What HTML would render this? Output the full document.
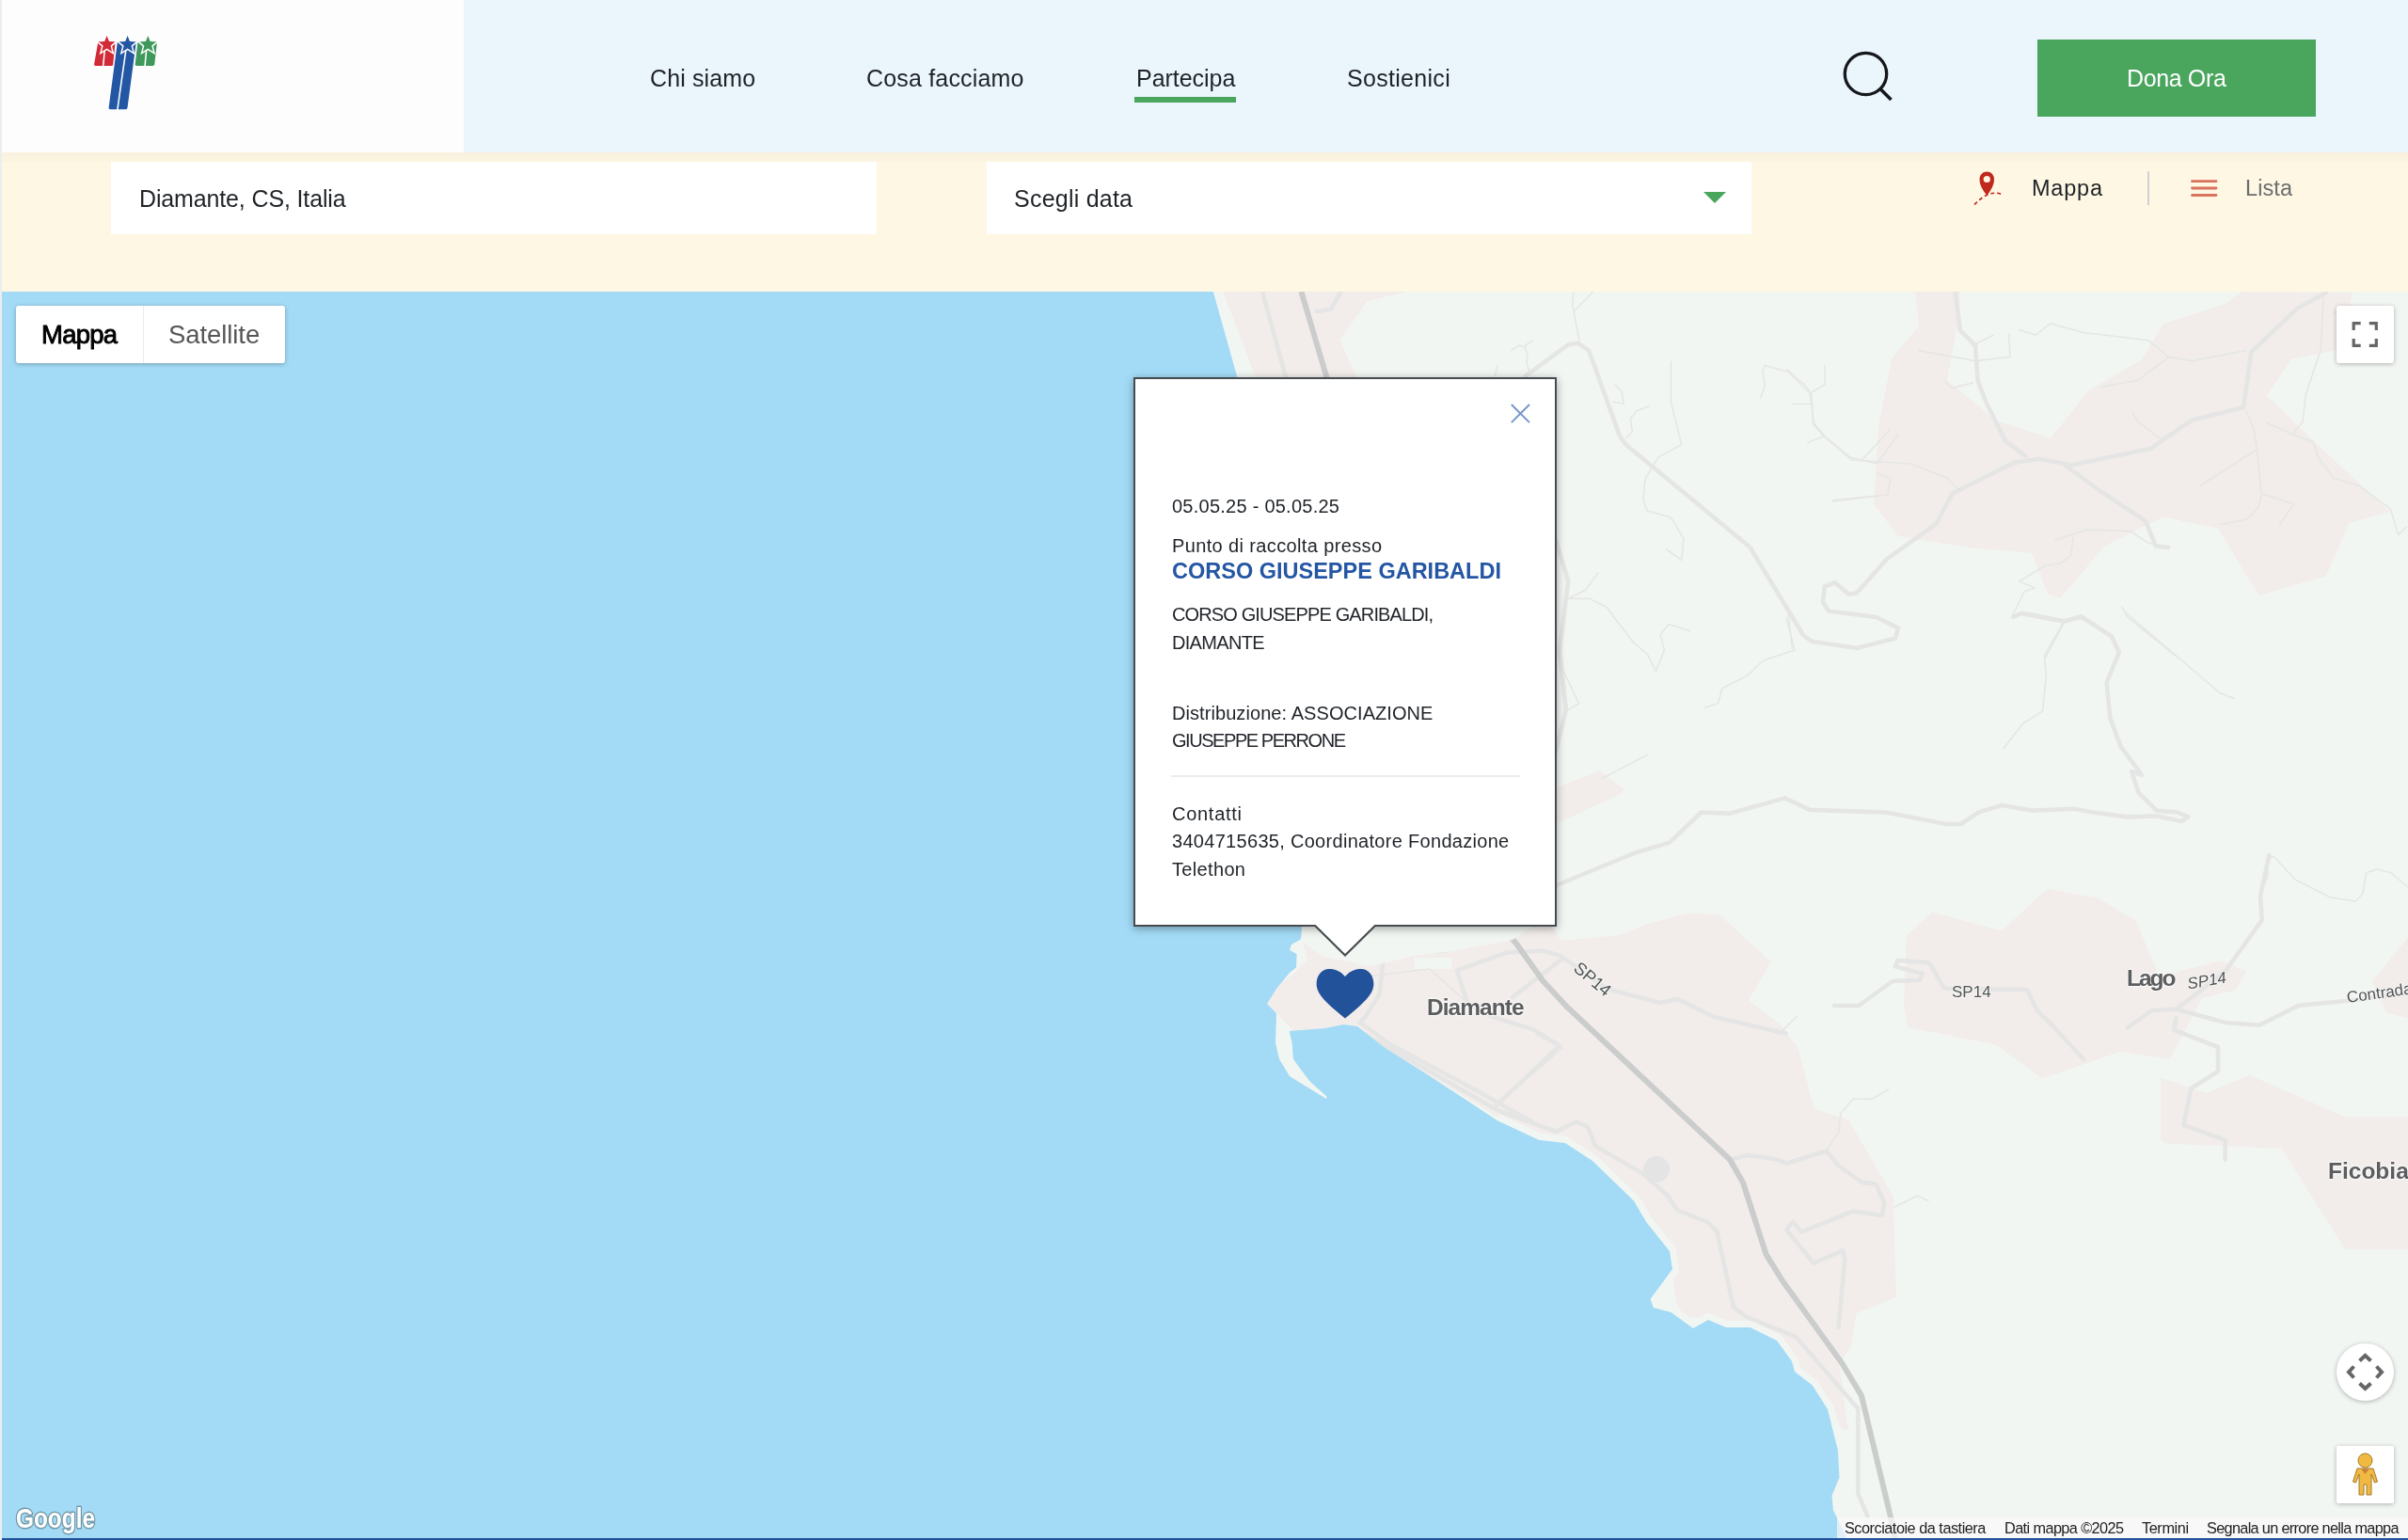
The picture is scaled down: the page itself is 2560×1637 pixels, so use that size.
<!DOCTYPE html>
<html><head><meta charset="utf-8">
<style>
html,body{margin:0;padding:0;}
body{width:2560px;height:1637px;position:relative;overflow:hidden;background:#fff;font-family:"Liberation Sans",sans-serif;color:#1f2328;}
.a{position:absolute;}
.t{position:absolute;white-space:pre;line-height:1;will-change:transform;}
#hdrL{left:0;top:0;width:493px;height:162px;background:#fdfdfd;}
#hdrR{left:493px;top:0;width:2067px;height:162px;background:#eaf5fc;}
#cream{left:0;top:162px;width:2560px;height:148px;background:#fef7e3;}
#creamsh{left:0;top:162px;width:2560px;height:10px;background:linear-gradient(#f8f0dc,#fcf5e2);}
.inp{background:#fff;top:172px;height:77px;}
#map{left:0;top:310px;width:2560px;height:1325px;overflow:hidden;background:#f2f6f2;}
#botline{left:0;top:1635px;width:2560px;height:2px;background:#22529a;}
#lborder{left:0;top:0;width:2px;height:1637px;background:#eceeee;}
.gbtn{position:absolute;background:#fff;box-shadow:0 1px 5px rgba(0,0,0,0.28);border-radius:3px;}
#popup{left:1205px;top:401px;width:446px;height:580px;background:#fff;border:2px solid #454b50;box-shadow:0 2px 9px rgba(0,0,0,0.35);}
</style></head>
<body>
<div class="a" id="hdrL"></div>
<div class="a" id="hdrR"></div>
<!-- logo -->
<svg class="a" style="left:90px;top:30px" width="90" height="95" viewBox="90 30 90 95">
 <g stroke-linejoin="round">
  <path d="M104.3,44.6 L122.6,44.6 L120.2,68.4 Q120.1,70 118.5,70 L101.6,70 Q99.9,70 100.1,68.3 Z" fill="#d22a37"/>
  <path d="M124.9,44.6 L144.8,44.6 L135.5,114.6 Q135.3,116.2 133.7,116.2 L117.1,116.2 Q115.4,116.2 115.6,114.5 Z" fill="#2457a3"/>
  <path d="M146.5,44.6 L167,44.6 L164.3,68.3 Q164.1,70 162.4,70 L145.2,70 Q143.5,70 143.7,68.3 Z" fill="#3f995b"/>
 </g>
 <g stroke="#fff" stroke-width="1.6">
  <line x1="111.6" y1="50" x2="109.6" y2="71"/>
  <line x1="134.3" y1="50" x2="124.8" y2="117"/>
  <line x1="155.9" y1="50" x2="154" y2="71"/>
 </g>
 <g stroke="#fff" stroke-width="1.5" stroke-linejoin="miter" stroke-miterlimit="10">
  <path d="M113.60,35.90 L116.54,43.25 L124.44,43.78 L118.36,48.85 L120.30,56.52 L113.60,52.30 L106.90,56.52 L108.84,48.85 L102.76,43.78 L110.66,43.25 Z" fill="#d22a37"/>
  <path d="M135.60,35.90 L138.54,43.25 L146.44,43.78 L140.36,48.85 L142.30,56.52 L135.60,52.30 L128.90,56.52 L130.84,48.85 L124.76,43.78 L132.66,43.25 Z" fill="#2457a3"/>
  <path d="M157.30,35.90 L160.24,43.25 L168.14,43.78 L162.06,48.85 L164.00,56.52 L157.30,52.30 L150.60,56.52 L152.54,48.85 L146.46,43.78 L154.36,43.25 Z" fill="#3f995b"/>
 </g>
</svg>
<div class="a" style="left:1206px;top:103px;width:108px;height:6px;background:#4aa55d"></div>
<svg class="a" style="left:1950px;top:45px" width="70" height="70" viewBox="1950 45 70 70">
<circle cx="1983.5" cy="78.5" r="22.2" fill="none" stroke="#15171a" stroke-width="3.3"/>
<line x1="1998.5" y1="94" x2="2010.5" y2="106" stroke="#15171a" stroke-width="3.6"/>
</svg>
<div class="a" style="left:2166px;top:42px;width:296px;height:82px;background:#4aa55d"></div>

<div class="a" id="cream"></div>
<div class="a" id="creamsh"></div>
<div class="a inp" style="left:118px;width:814px"></div>
<div class="a inp" style="left:1049px;width:813px"></div>
<svg class="a" style="left:1811px;top:204px" width="24" height="12"><polygon points="0,0 24,0 12,12" fill="#4aa55d"/></svg>
<!-- map/list toggle -->
<svg class="a" style="left:2090px;top:175px" width="50" height="50" viewBox="2090 175 50 50">
 <path d="M2112.3,208 C2108,202 2104.5,197 2104.5,190.5 C2104.5,185.8 2108,182.5 2112.3,182.5 C2116.6,182.5 2120,185.8 2120,190.5 C2120,197 2116.6,202 2112.3,208 Z" fill="#c0281e"/>
 <circle cx="2112.3" cy="190.5" r="3.6" fill="#fef7e3"/>
 <path d="M2099,217.5 Q2105,211 2112,207.5 Q2120,203.5 2128,206.5" fill="none" stroke="#c0281e" stroke-width="1.6" stroke-dasharray="4,3"/>
</svg>
<div class="a" style="left:2283px;top:182px;width:2px;height:36px;background:#cfd0d4"></div>
<svg class="a" style="left:2325px;top:185px" width="40" height="30" viewBox="2325 185 40 30">
 <g stroke="#d9735d" stroke-width="2.8" stroke-linecap="round">
 <line x1="2330.5" y1="192.7" x2="2356" y2="192.7"/>
 <line x1="2330.5" y1="200" x2="2356" y2="200"/>
 <line x1="2330.5" y1="207.5" x2="2356" y2="207.5"/>
 </g>
</svg>

<div id="map" class="a">
<svg width="2560" height="1325" viewBox="0 310 2560 1325" style="position:absolute;left:0;top:0;will-change:transform">
 <!-- urban pink -->
 <g fill="#f2edeb">
  <polygon points="1300,310 1497,310 1453.6,320 1424.4,361.7 1442.8,401 1480,500 1650,984 1660,1000 1720.7,994 1753,981.4 1796,970.6 1828.7,972.7 1883,1022.4 1859,1063.4 1893.5,1089.4 1911.6,1113.8 1928.6,1178.7 1965,1190 2013,1272 2016,1379 1973.8,1396 1968,1431.6 1955.5,1450.5 1965,1520 1958.6,1520 1942.8,1491.7 1908,1447 1889,1422 1860.5,1408.8 1835,1407.8 1816,1401.5 1791,1400 1781.5,1384 1778,1352.5 1781.5,1336.6 1775,1324 1740,1273 1693,1230.7 1667.6,1214.8 1636,1208.5 1598,1191 1514,1140 1471,1113 1443,1091 1428.6,1089 1408.6,1093 1375,1096 1360,1080 1347,1067 1357,1048.6 1374,1035.7 1390,1020 1380,984 1334.8,401"/>
  <polygon points="1655,836.7 1701,819.4 1727,838.9 1720.7,845.3 1655,875.6"/>
  <polygon points="2036,310 2040,346.6 2011,381 1997,453.5 1992,535.7 2018,570 2092,582 2160,588 2177,631.7 2190.6,635.8 2237,581 2300,549.5 2357.8,561.8 2401.6,633 2473,612.5 2497.6,556 2541,544 2473,481 2410,420.6 2436,382 2484,372.6 2501.7,311 2382.5,310 2366,323 2300,343.9 2277,382 2220.7,415 2179.6,466 2122,446.7 2070,404 2082,341 2083.7,310"/>
  <polygon points="2054,969.6 2128,989.6 2176,944.7 2230.6,954.6 2271,979 2295.5,1037.7 2360.5,1021.6 2389,1032.5 2376,1053 2341,1061 2307,1126 2254,1118 2171,1146.8 2121.5,1110.4 2028,1092 2024,1069 2026.6,994.8"/>
  <polygon points="2297,1145.5 2345,1162 2391.7,1143 2493,1187 2560,1187 2560,1328 2493,1328 2425.5,1221 2303,1215.7 2297,1211.8"/>
  <polygon points="2560,996 2521.6,1043 2537,1076.7 2560,1082"/>
 </g>
 <!-- minor roads -->
 <g fill="none" stroke="#e5e6e5" stroke-width="1.6" stroke-linejoin="round" stroke-linecap="round">
  <polyline points="1900,393.2 1919.2,409.6 1926,419 1927.4,450.8 1939.7,464.5 1968.5,489 2031.6,493 2070,508.3 2081,519.3"/>
  <polyline points="1979.5,489 2009.6,456.2"/>
  <polyline points="1996,492 2017.9,461.7"/>
  <polyline points="1948,533 2007,526 2009.6,508.3 1996,502.9"/>
  <polyline points="2067,405.5 2075.4,412.4 2097.4,407"/>
  <polyline points="2100,365.8 2119.3,356.2"/>
  <polyline points="2135.7,354.8 2137,379.5"/>
  <polyline points="2039.8,372.6 2100,383.6 2135.7,379.5"/>
  <polyline points="2146.7,350.7 2164.5,356.2 2179.6,343.9 2215.2,353.5 2283.8,361.7 2305.7,379.5 2330.4,383.6 2388,372.6"/>
  <polyline points="2234.4,411 2272.8,404.2 2305.7,379.5"/>
  <polyline points="2267.3,439.8 2272.8,448 2297.5,467.2"/>
  <polyline points="2388,437 2396,456.2 2399,475.4 2404.4,524.8 2401.6,538.5 2388,552.2 2360.5,557.7"/>
  <polyline points="2399,478 2338.6,516.6"/>
  <polyline points="2404.4,524.8 2438.6,535.7 2423.6,557.7"/>
  <polyline points="2410,449.4 2437.3,461.7 2459.2,470 2464.7,486.4 2481.1,508.3 2508.6,516.6 2541.4,541.2 2549.7,568.6 2558,560.4"/>
  <polyline points="2470,316.4 2467.4,371.3 2451,420.6 2448.2,448 2437.3,461.7"/>
  <polyline points="2481.1,332.9 2500.3,324.7"/>
  <polyline points="1900,642.6 1905.5,689.3"/>
  <polyline points="2138.5,656.4 2152,629 2163,624.8 2146.7,618 2174,601.5 2190.6,598.8 2201.5,590.6 2204.3,571.4"/>
  <polyline points="2138.5,656.4 2155,651 2196,659 2212.5,653.6 2245.4,675.5 2253.6,697.5"/>
  <polyline points="2196,659 2174,700"/>
  <polyline points="2256,645.4 2262,656.4 2316.7,700"/>
  <polyline points="2185,574 2218,563 2264.6,564.5 2283.8,577 2297.5,581"/>
  <polyline points="1672.8,310 1671.6,323.7 1679,362.3"/>
  <polyline points="1717,409 1724,416 1726.4,429.5 1715,427.3"/>
  <polyline points="1753.6,431.8 1740,436.4 1733.2,445.5 1735.5,459 1728.6,466"/>
  <polyline points="1776.4,384 1776.4,427.3 1787.7,472.7 1762.7,486.4 1749,509 1746.8,531.8 1751.4,543 1776.4,550 1790,572.7 1787.7,595.5 1771.8,584"/>
  <polyline points="1876.4,388.6 1874,395.5 1876.4,409 1871.8,422.7"/>
  <polyline points="1876.4,388.6 1901.4,395.5 1912.7,406.8 1924,418 1940,409 1940,388.6"/>
  <polyline points="1924,418 1928.6,450 1940,463.6 1967.3,486.4 1996.8,493.2"/>
  <polyline points="1906,429.5 1926.4,429.5"/>
  <polyline points="1921.8,470.5 1940,463.6"/>
  <polyline points="1949,531.8 1992.3,527.3"/>
  <polyline points="1667.3,636.4 1690,636.4 1708,645.5 1735.5,681.8 1751.4,695.5 1760.5,713.6 1769.5,690.9 1765,675 1774,663.6 1796.8,670.5"/>
  <polyline points="1667.3,636.4 1685.5,627.3 1699,609"/>
  <polyline points="1899,656.8 1908,691 1874,702.3 1858,718 1831,731.8 1826.4,747.7 1812.7,752.3"/>
  <polyline points="1658,704.5 1678.6,747.7 1667.3,754.5"/>
  <polyline points="1751.4,802.3 1703.6,827.3"/>
  <polyline points="2258.5,650 2360.5,737 2375.6,742.6"/>
  <polyline points="2194,660.6 2173.4,697 2175.3,718 2171.5,755.8 2150.8,769 2130,795.5"/>
  <polyline points="2387,1000 2405.9,978.8 2402,952 2411.5,929.7 2409.6,914.6 2417,910 2440,935 2477.7,954 2504,958 2511.7,950.5 2515.5,927.8 2526.8,924 2542,927.8 2560,943"/>
  <polyline points="1633.6,1100 1661.5,1114 1588,1176.7"/>
 </g>
 <g fill="none" stroke-linejoin="round" stroke-linecap="round">
  <g stroke="#e4e5e4" stroke-width="4.6">
  <polyline id="r1" points="1621.8,399.7 1667.8,366 1677.8,364.8 1689,372.3 1722,463.6 1728.6,472.7 1860.5,581.8 1917,675 1926,681.8 1974,689 2015,678.5 2018,667.5 1994.6,656 1944,649.5 1938,640 1939.7,623.5 1950.7,619.2 1965.8,631.7 1974,630.3 2005.5,594.7 2059,556.3 2075.4,524.8 2141,491.9 2168.6,487.8 2201.5,494.6 2286.5,476.8 2330,446.7 2385,433 2393.4,374 2442.8,327.4 2473,311"/>
  <polyline points="1655,941 1737,907 1774.7,895.6 1808.7,863.5 1839,864.7 1897.5,848.4 1924,860.9 2005,863.5 2069.5,876 2084.6,876 2103.5,863.5 2128,856 2160,861.6 2205.6,859.7 2224.5,863.5 2262,868.4 2292.5,867.3 2319,873 2326.5,868.4 2315,863.5 2292.5,861.6 2273.6,842.7 2266,820 2277,823.8 2254.7,793.6 2243.4,763.4 2239.6,725.6 2252.8,693.5 2245,676.5 2213,655.7 2194,660.6 2148.9,652 2141,655.7"/>
  <polyline points="1950,1069 1976,1069 2012,1043 2041,1041.6 2043.5,1035 2015,1027.3 2017.5,1020.8 2051,1023.4 2067,1050.7 2155,1052 2165.6,1074 2183.8,1092 2215,1126"/>
  <polyline points="2261.8,1092.3 2287.8,1074 2313.7,1072.8 2365.7,1087 2402,1089.7 2443.6,1068.9 2495.6,1063.7 2560,1055.9"/>
  <polyline points="2412.5,909 2403,952 2404.7,978 2365.7,1032.5 2313.7,1072.8"/>
  <polyline points="2313.7,1082 2311,1094.9 2358,1113 2358,1139 2329.3,1157 2321.5,1196 2365.7,1211.8 2365.7,1232.5"/>
  <polyline points="1342,310 1367,401"/>
  <polyline points="1425,311 1415,328.7 1400,331"/>
  <polyline points="1452,1100 1591.8,1180 1654.5,1203 1675.5,1192.4 1687.7,1197.6 1696.4,1218.6 1745,1246.5 1773,1271 1783.6,1286.6 1815,1298.8 1825.4,1309 1843,1389.5 1856.8,1400 1909,1420.8 1975.4,1497.6 1975.4,1588 1985.8,1612.6"/>
  <polyline points="1445.7,1087 1478,1110 1573.7,1161.5 1631,1194"/>
  <polyline points="1465,1003 1470.6,1018 1466.7,1056.4 1451.5,1081 1445.7,1087"/>
  <polyline points="1440,1008.6 1470.6,1012.5 1535.5,1010.6 1573.7,989.6"/>
  <polyline points="1549,1031.6 1602,1012.5 1640.6,1010.6 1659.7,1016.3 1707.4,1050.7 1764.7,1066 1783.8,1062 1822,1081 1898.5,1098.4"/>
  <polyline points="1549,1031.6 1560,1066 1587,1081 1631,1094.6 1657.8,1111.8 1591,1174.8"/>
  <polyline points="1608,1060 1640.6,1035 1659.7,1020"/>
  <polyline points="1842,1232.3 1857.5,1228 1888.4,1232.3 1899.4,1236.7 1941.4,1223.5 1954.6,1239 1979,1256.6 1994.4,1258.8 2003.2,1278.7 2001,1292 1970,1287.5 1915,1309.6 1906,1298.5 1899.4,1307.4 1928,1342.7 1959,1329.4 1961.3,1338.3 1954.6,1411"/>
  </g>
 </g>
 <g fill="none" stroke="#cbcccc" stroke-width="6" stroke-linejoin="round">
  <polyline points="1383.4,310 1410.4,401 1500,700 1595.5,984 1612,1003 1640.6,1043 1665.4,1069.8 1839,1232.5 1853,1257 1877.7,1333.7 1895,1361.5 1958,1448.7 1979,1483.6 2010,1612.6 2014.7,1635"/>
 </g>
 <circle cx="1761" cy="1243" r="14" fill="#e4e4e4"/>
 <!-- light patches / beach -->
 <g fill="#f2f6f2">
  <polygon points="1384,984 1631,984 1608,999 1547,1010.6 1503,1016 1457,1027 1407,1017 1384,1000"/>
  <polygon points="1504,1018 1543,1018 1543,1030 1504,1030"/>
 </g>
 <polyline fill="none" stroke="#f2f6f2" stroke-width="14" stroke-linejoin="round" points="1591.6,1191 1636,1211.7 1664,1215 1693,1234 1737,1276.5 1750,1298.7 1775,1330 1778,1349 1754.6,1381 1757.7,1390 1776.7,1395 1800,1412 1816,1403 1835,1411 1860.5,1411 1889,1425 1905,1447 1908,1458 1927,1472.7 1943,1498 1954,1542 1955.5,1570.8 1947.5,1589.7 1949,1605.5 1958.6,1624.5 1963,1640"/>
 <g fill="none" stroke="#e4e5e4" stroke-width="4.6" stroke-linejoin="round" stroke-linecap="round">
  <polyline points="1653.6,572.7 1667.3,618 1658,691 1665,754.5 1653.6,800"/>
  <polyline points="2078.7,310 2084,351.4 2100,367.4 2102.7,404.7 2110.7,426 2132,468.6 2153.3,484.6"/>
  <polyline points="2196,495 2233,522 2281,553.8 2291.7,580.4 2305,582"/>
 </g>
 <g fill="none" stroke="#e5e6e5" stroke-width="1.6" stroke-linejoin="round" stroke-linecap="round">
  <polyline points="1440,1040 1520,1030 1560,1066"/>
  <polyline points="1890.6,1099.9 1910.5,1080"/>
  <polyline points="2007.6,1158.4 1990,1168.3 1970,1168.3 1956.8,1183.8 1954.6,1203.6 1941.4,1223.5"/>
  <polyline points="2014.2,1283 2038.5,1271 2050,1276.5"/>
  <polyline points="1674,330 1694,310"/>
  <polyline points="1606.8,372.3 1614.3,367.3 1620.5,368.5 1629.2,361.7"/>
  <polyline points="1620.5,368.5 1624,377.3 1623,384.7 1625.5,394.7"/>
  <polyline points="1591.9,388.5 1589.4,399.7"/>
 </g>
 <!-- sea -->
 <polygon fill="#a3dbf6" points="0,310 1289.8,310 1315.4,401 1350,700 1384,984 1383,998.6 1373,1004 1371,1010 1378.6,1014 1378,1028.6 1371,1034 1357,1051 1347,1067 1357,1077 1356,1108.6 1360,1125.7 1371,1144 1410,1168 1410.7,1165.7 1393,1150 1383,1137 1375,1126 1373.6,1108.6 1370.7,1096 1408.6,1093 1428.6,1089 1443,1091 1471,1113 1514,1140 1560,1170 1591.6,1191 1636,1211.7 1664,1215 1693,1234 1737,1276.5 1750,1298.7 1775,1330 1778,1349 1754.6,1381 1757.7,1390 1776.7,1395 1800,1412 1816,1403 1835,1411 1860.5,1411 1889,1425 1905,1447 1908,1458 1927,1472.7 1943,1498 1954,1542 1955.5,1570.8 1947.5,1589.7 1949,1605.5 1958.6,1624.5 1963,1635 0,1635"/>
 <!-- heart -->
 <path fill="#22539a" d="M1430,1038 C1424,1031 1418,1030 1413,1030 C1405,1030 1399.6,1037 1399.6,1046 C1399.6,1057 1410,1066 1430,1082.6 C1450,1066 1460.4,1057 1460.4,1046 C1460.4,1037 1455,1030 1447,1030 C1442,1030 1436,1031 1430,1038 Z"/>
 <!-- labels -->
 <g font-family="Liberation Sans" fill="#525456" stroke="#f6f6f4" stroke-width="2" paint-order="stroke" stroke-linejoin="round">
  <text x="1693" y="1047" font-size="18.5" transform="rotate(40 1693 1041)" text-anchor="middle">SP14</text>
  <text x="2075" y="1060" font-size="17">SP14</text>
  <text x="2346" y="1048" font-size="17" font-style="italic" transform="rotate(-10 2346 1042)" text-anchor="middle">SP14</text>
  <text x="2495" y="1066" font-size="17" transform="rotate(-8 2495 1060)">Contrada</text>
 </g>
 <!-- google logo -->
 <text x="17" y="1623.5" font-family="Liberation Sans" font-weight="bold" font-size="30" fill="#fff" stroke="#7399a8" stroke-width="3" stroke-linejoin="round" paint-order="stroke" textLength="84" lengthAdjust="spacingAndGlyphs">Google</text>
</svg>
<!-- map type control -->
<div class="gbtn" style="left:17px;top:15px;width:286px;height:61px;border-radius:3px"></div>
<div class="a" style="left:152px;top:15px;width:1px;height:61px;background:#ebebeb"></div>
<!-- fullscreen -->
<div class="gbtn" style="left:2484px;top:15px;width:61px;height:61px"></div>
<svg class="a" style="left:2484px;top:15px" width="61" height="61" viewBox="0 0 61 61">
 <g fill="none" stroke="#666" stroke-width="3.2">
  <polyline points="18.2,25.9 18.2,18.6 25.7,18.6"/>
  <polyline points="34.8,18.6 42.3,18.6 42.3,25.9"/>
  <polyline points="18.2,35 18.2,42.4 25.7,42.4"/>
  <polyline points="34.8,42.4 42.3,42.4 42.3,35"/>
 </g>
</svg>
<!-- camera control -->
<div class="gbtn" style="left:2484px;top:1118px;width:61px;height:61px;border-radius:50%"></div>
<svg class="a" style="left:2484px;top:1118px" width="61" height="61" viewBox="0 0 61 61">
 <g fill="none" stroke="#666" stroke-width="4" stroke-linejoin="miter">
  <polyline points="24.5,18.5 30.5,13 36.5,18.5"/>
  <polyline points="24.5,42.5 30.5,48 36.5,42.5"/>
  <polyline points="18.5,24.5 13,30.5 18.5,36.5"/>
  <polyline points="42.5,24.5 48,30.5 42.5,36.5"/>
 </g>
</svg>
<!-- pegman -->
<div class="gbtn" style="left:2484px;top:1227px;width:61px;height:61px;border-radius:2px"></div>
<svg class="a" style="left:2484px;top:1227px" width="61" height="61" viewBox="0 0 61 61">
 <circle cx="30.5" cy="15.5" r="7.5" fill="#f2b942" stroke="#a07a2a" stroke-width="1"/>
 <path d="M22,24 L39,24 L43.5,38 L40.5,39 L37,30 L37,52 L32,52 L32,41 L29,41 L29,52 L24,52 L24,30 L20.5,39 L17.5,38 Z" fill="#f2b942" stroke="#a07a2a" stroke-width="1" stroke-linejoin="round"/>
 <path d="M26,24 L35,24 L30.5,30 Z" fill="#c9813a"/>
</svg>
<!-- attribution -->
<div class="a" style="left:1953px;top:1303px;width:607px;height:22px;background:rgba(250,250,250,0.7)"></div>
</div>
<!-- popup -->
<div class="a" id="popup"></div>
<svg class="a" style="left:1390px;top:982px" width="80" height="40" viewBox="1390 982 80 40">
 <polygon points="1397.6,985 1462.4,985 1430,1017" fill="#454b50"/>
 <polygon points="1398.6,983 1461.4,983 1430,1014" fill="#fff"/>
</svg>
<svg class="a" style="left:1600px;top:424px" width="32" height="32" viewBox="1600 424 32 32">
 <g stroke="#6f93c8" stroke-width="1.8"><line x1="1606.8" y1="430" x2="1626" y2="449.2"/><line x1="1626" y1="430" x2="1606.8" y2="449.2"/></g>
</svg>
<div class="a" style="left:1245px;top:824px;width:371px;height:2px;background:#ececec"></div>

<div class="a" id="botline"></div>
<div class="a" id="lborder"></div>
<div class="t" style="left:690.8px;top:71.2px;font-size:25px;font-weight:400;color:#1f2328;letter-spacing:0.13px;">Chi siamo</div>
<div class="t" style="left:921.2px;top:71.2px;font-size:25px;font-weight:400;color:#1f2328;letter-spacing:0.18px;">Cosa facciamo</div>
<div class="t" style="left:1207.7px;top:70.6px;font-size:25px;font-weight:400;color:#1f2328;letter-spacing:-0.04px;">Partecipa</div>
<div class="t" style="left:1431.7px;top:70.6px;font-size:25px;font-weight:400;color:#1f2328;letter-spacing:0.30px;">Sostienici</div>
<div class="t" style="left:2261.0px;top:71.1px;font-size:25px;font-weight:400;color:#ffffff;letter-spacing:-0.37px;">Dona Ora</div>
<div class="t" style="left:148.3px;top:198.9px;font-size:25px;font-weight:400;color:#1f2328;letter-spacing:-0.14px;">Diamante, CS, Italia</div>
<div class="t" style="left:1078.0px;top:198.9px;font-size:25px;font-weight:400;color:#1f2328;letter-spacing:0.23px;">Scegli data</div>
<div class="t" style="left:2160.0px;top:189.1px;font-size:23.5px;font-weight:400;color:#1f2328;letter-spacing:0.79px;">Mappa</div>
<div class="t" style="left:2387.0px;top:189.1px;font-size:23.5px;font-weight:400;color:#6b6d6e;letter-spacing:0.09px;">Lista</div>
<div class="t" style="left:1245.8px;top:527.6px;font-size:20px;font-weight:400;color:#1f2328;letter-spacing:0.25px;">05.05.25 - 05.05.25</div>
<div class="t" style="left:1245.8px;top:569.5px;font-size:20px;font-weight:400;color:#1f2328;letter-spacing:0.37px;">Punto di raccolta presso</div>
<div class="t" style="left:1245.8px;top:596.1px;font-size:23.5px;font-weight:700;color:#2456a4;letter-spacing:0.00px;">CORSO GIUSEPPE GARIBALDI</div>
<div class="t" style="left:1245.8px;top:643.4px;font-size:20px;font-weight:400;color:#1f2328;letter-spacing:-0.87px;">CORSO GIUSEPPE GARIBALDI,</div>
<div class="t" style="left:1245.8px;top:673.1px;font-size:20px;font-weight:400;color:#1f2328;letter-spacing:-0.69px;">DIAMANTE</div>
<div class="t" style="left:1245.8px;top:747.5px;font-size:20px;font-weight:400;color:#1f2328;letter-spacing:0.07px;">Distribuzione: ASSOCIAZIONE</div>
<div class="t" style="left:1245.8px;top:777.1px;font-size:20px;font-weight:400;color:#1f2328;letter-spacing:-1.45px;">GIUSEPPE PERRONE</div>
<div class="t" style="left:1245.8px;top:854.5px;font-size:20px;font-weight:400;color:#1f2328;letter-spacing:0.72px;">Contatti</div>
<div class="t" style="left:1245.8px;top:884.4px;font-size:20px;font-weight:400;color:#1f2328;letter-spacing:0.30px;">3404715635, Coordinatore Fondazione</div>
<div class="t" style="left:1245.8px;top:913.5px;font-size:20px;font-weight:400;color:#1f2328;letter-spacing:0.34px;">Telethon</div>
<div class="t" style="left:43.5px;top:341.5px;font-size:27.5px;font-weight:400;color:#000000;letter-spacing:-0.77px;-webkit-text-stroke:0.9px #000;">Mappa</div>
<div class="t" style="left:179.4px;top:341.5px;font-size:27.5px;font-weight:400;color:#565656;letter-spacing:-0.08px;">Satellite</div>
<div class="t" style="left:1516.7px;top:1059.3px;font-size:24.5px;font-weight:700;color:#5b5d5e;letter-spacing:-0.96px;text-shadow:0 0 2px #fff,0 0 2px #fff,0 0 3px #fff;">Diamante</div>
<div class="t" style="left:2260.5px;top:1028.2px;font-size:24.5px;font-weight:700;color:#5b5d5e;letter-spacing:-2.01px;text-shadow:0 0 2px #fff,0 0 2px #fff,0 0 3px #fff;">Lago</div>
<div class="t" style="left:2474.8px;top:1233.2px;font-size:24.5px;font-weight:700;color:#5b5d5e;letter-spacing:0.00px;text-shadow:0 0 2px #fff,0 0 2px #fff,0 0 3px #fff;">Ficobiana</div>
<div class="t" style="left:1960.6px;top:1616.2px;font-size:16.3px;font-weight:400;color:#222222;letter-spacing:-0.49px;">Scorciatoie da tastiera</div>
<div class="t" style="left:2130.5px;top:1616.2px;font-size:16.3px;font-weight:400;color:#222222;letter-spacing:-0.60px;">Dati mappa ©2025</div>
<div class="t" style="left:2276.8px;top:1616.2px;font-size:16.3px;font-weight:400;color:#222222;letter-spacing:-0.41px;">Termini</div>
<div class="t" style="left:2345.5px;top:1616.2px;font-size:16.3px;font-weight:400;color:#222222;letter-spacing:-0.68px;">Segnala un errore nella mappa</div>
</body></html>
